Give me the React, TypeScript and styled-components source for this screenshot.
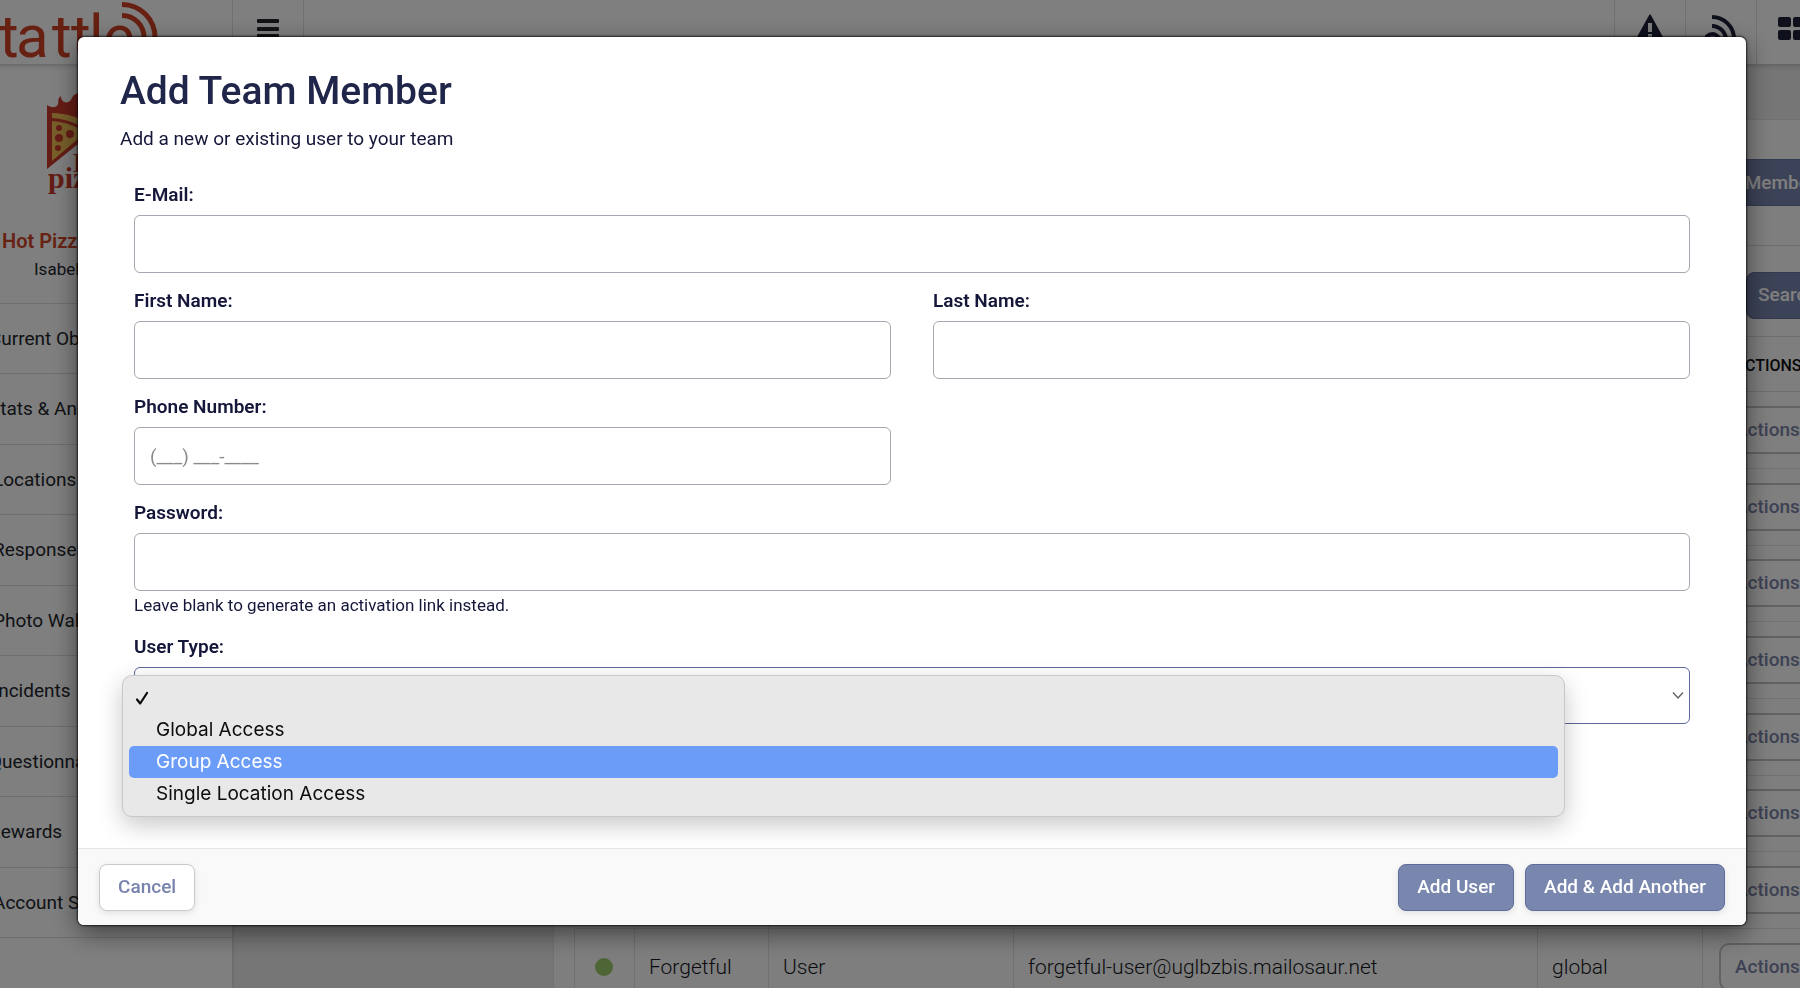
import React from "react";
import styled, { createGlobalStyle } from "styled-components";

const GlobalStyle = createGlobalStyle`
  *, *::before, *::after { box-sizing: border-box; }
  html, body, #root { height: 100%; }
  body {
    margin: 0;
    overflow: hidden;
    background: #ededed;
    color: #15173a;
    font-family: Roboto, "Liberation Sans", sans-serif;
    font-size: 19px;
    line-height: 24px;
  }
  button, input, select { font: inherit; color: inherit; }
`;

const Shell = styled.div`
  height: 100vh;
  margin: 0 -60px 0 -46px;
  display: flex;
  flex-direction: column;
  overflow: hidden;
`;

const TopBar = styled.header`
  flex: none;
  height: 64px;
  padding-right: 33px;
  display: flex;
  background: #fff;
  box-shadow: 0 1px 6px rgba(0, 0, 0, 0.25);
  z-index: 1;
`;

const Brand = styled.a`
  width: 278px;
  padding-left: 46px;
  svg { display: block; }
`;

const BarButton = styled.button`
  width: 71px;
  padding: 0;
  border: 0;
  border-left: 1px solid #e0e0e0;
  background: none;
  display: flex;
  justify-content: center;
  align-items: flex-start;
`;

const BarSpacer = styled.div`
  flex: 1;
  border-left: 1px solid #e0e0e0;
`;

const Columns = styled.div`
  flex: 1;
  min-height: 0;
  display: flex;
`;

const Sidebar = styled.aside`
  flex: none;
  width: 278px;
  background: #fff;
  box-shadow: 0 0 4px rgba(0, 0, 0, 0.2);
`;

const Profile = styled.div`
  height: 240px;
  padding: 28px 0 0 48px;
  border-bottom: 1px solid #dedede;
  svg { display: block; margin-left: 40px; }
`;

const Company = styled.strong`
  display: block;
  margin-top: 32px;
  color: #d04527;
  font-size: 20px;
  font-weight: 600;
`;

const UserName = styled.div`
  padding-left: 32px;
  margin-top: 4px;
  font-size: 17px;
  color: #22252c;
`;

const NavLink = styled.a`
  display: flex;
  align-items: center;
  height: 70px;
  padding-left: 20px;
  border-bottom: 1px solid #dedede;
  color: #22252c;
  text-decoration: none;
  white-space: nowrap;
  &:nth-child(even) { height: 71px; }
`;

const NavGlyph = styled.span<{ $width: number }>`
  flex: none;
  width: ${(p) => p.$width}px;
`;

const Main = styled.main`
  flex: 1;
  min-width: 0;
  padding: 55px 0 0 321px;
`;

const Panel = styled.section`
  background: #fcfcfc;
  min-height: 100%;
  border: 1px solid #e2e2e2;
`;

const PanelHead = styled.div<{ $height: number; $drop?: number }>`
  height: ${(p) => p.$height}px;
  padding-top: ${(p) => p.$drop ?? 0}px;
  display: flex;
  align-items: center;
  justify-content: flex-end;
  border-bottom: 1px solid #dcdcdc;
`;

const PanelButton = styled.button<{ $width: number; $inset: number }>`
  height: 47px;
  width: ${(p) => p.$width}px;
  padding: 0 0 0 ${(p) => p.$inset}px;
  border: 1px solid #6774a0;
  border-radius: 8px;
  background: #7985ae;
  color: #fff;
  font-weight: 500;
  text-align: left;
  white-space: nowrap;
`;

const Team = styled.table`
  width: calc(100% - 20px);
  margin-left: 20px;
  border-collapse: collapse;
  table-layout: fixed;
  th {
    height: 54px;
    padding: 4px 0 0;
    border-bottom: 1px solid #dcdcdc;
    font-size: 16px;
    font-weight: 500;
    text-align: left;
    color: #111;
  }
  th:last-child { padding-left: 32px; }
  td {
    height: 77px;
    padding: 0 14px;
    border: 1px solid #e2e2e2;
    font-size: 21px;
    font-weight: 300;
    color: #15171c;
  }
  tr:nth-child(3n) td { height: 76px; }
  td:first-child { padding-left: 20px; }
`;

const StatusDot = styled.span`
  display: block;
  width: 18px;
  height: 18px;
  border-radius: 50%;
  background: #9ccc6a;
`;

const RowAction = styled.button`
  display: block;
  width: 120px;
  height: 48px;
  margin-left: 2px;
  padding: 0 14px;
  border: 2px solid #c4c4c4;
  border-radius: 10px;
  background: #fff;
  color: #7b83a8;
  font-size: 19px;
  font-weight: 500;
  text-align: left;
`;

const Backdrop = styled.div`
  position: fixed;
  inset: 0;
  display: flex;
  align-items: flex-start;
  padding: 37px 54px 37px 78px;
  background: rgba(0, 0, 0, 0.5);
  z-index: 10;
`;

const Modal = styled.form`
  flex: 1;
  border-radius: 6px;
  background: #fff;
  box-shadow: 0 0 2px 1px rgba(0, 0, 0, 0.7), 0 8px 26px rgba(0, 0, 0, 0.5);
`;

const ModalHead = styled.header`
  padding: 30px 42px 0;
`;

const Title = styled.h1`
  margin: 0;
  font-size: 39px;
  line-height: 48px;
  font-weight: 500;
  color: #20254a;
`;

const Subtitle = styled.p`
  margin: 12px 0 0;
`;

const Fields = styled.div`
  display: grid;
  grid-template-columns: 1fr 1fr;
  column-gap: 42px;
  row-gap: 16px;
  padding: 32px 56px 124px;
`;

const Field = styled.div<{ $wide?: boolean }>`
  grid-column: ${(p) => (p.$wide ? "1 / -1" : "auto")};
  display: flex;
  flex-direction: column;
`;

const Label = styled.label`
  margin-bottom: 8px;
  font-weight: 600;
`;

const TextInput = styled.input`
  width: 100%;
  height: 58px;
  padding: 0 15px;
  border: 1px solid #a5a8b0;
  border-radius: 6px;
  background: #fff;
  outline: 0;
  &::placeholder { color: #8b8b8e; opacity: 1; }
`;

const Hint = styled.small`
  font-size: 17px;
  line-height: 28px;
`;

const SelectWrap = styled.div`
  position: relative;
`;

const TypeSelect = styled.select`
  display: block;
  width: 100%;
  height: 57px;
  padding: 0 15px;
  border: 1px solid #5a6b9a;
  border-radius: 6px;
  background: #fff;
  appearance: none;
  outline: 0;
`;

const Chevron = styled.svg`
  position: absolute;
  right: 5px;
  top: 24px;
  pointer-events: none;
`;

const Options = styled.ul`
  position: absolute;
  top: 8px;
  left: -12px;
  right: 125px;
  margin: 0;
  padding: 6px;
  list-style: none;
  border: 1px solid #c8c8c8;
  border-radius: 10px;
  background: #e8e8e8;
  box-shadow: 0 8px 24px rgba(0, 0, 0, 0.22);
`;

const Option = styled.li<{ $active?: boolean }>`
  display: grid;
  grid-template-columns: 20px 1fr;
  align-items: center;
  column-gap: 1px;
  height: 32px;
  padding-left: 6px;
  border-radius: 5px;
  background: ${(p) => (p.$active ? "#6b9df8" : "transparent")};
  color: ${(p) => (p.$active ? "#fff" : "#0c0c0c")};
  font-family: Inter, sans-serif;
`;

const ModalFoot = styled.footer`
  display: flex;
  align-items: center;
  gap: 11px;
  height: 77px;
  padding: 0 21px;
  border-top: 1px solid #e6e6e6;
  border-radius: 0 0 6px 6px;
  background: #f9f9f9;
`;

const Button = styled.button<{ $plain?: boolean }>`
  height: 47px;
  padding: 0 18px;
  border: 1px solid ${(p) => (p.$plain ? "#c9c9d0" : "#5f6c9c")};
  border-radius: 8px;
  background: ${(p) => (p.$plain ? "#fff" : "#7986ae")};
  color: ${(p) => (p.$plain ? "#7883ae" : "#fff")};
  font-weight: 500;
  box-shadow: 0 2px 6px rgba(0, 0, 0, 0.1);
  margin-right: ${(p) => (p.$plain ? "auto" : "0")};
`;

const nav = [
  { label: "Current Observations", glyph: 15 },
  { label: "Stats & Analytics", glyph: 15 },
  { label: "Locations", glyph: 19 },
  { label: "Responses", glyph: 19 },
  { label: "Photo Wall", glyph: 19 },
  { label: "Incidents", glyph: 19 },
  { label: "Questionnaires", glyph: 15 },
  { label: "Rewards", glyph: 15 },
  { label: "Account Settings", glyph: 19 },
];

const columns = [60, 134, 245, 524, 165];
const rows = [0, 1, 2, 3, 4, 5, 6, 7];

const TattleLogo = () => (
  <svg width="170" height="64" viewBox="0 0 170 64" aria-label="tattle">
    <text x="-1 16 52 71 89 103" y="57" fill="#cf4124" fontFamily="Roboto, sans-serif" fontSize="60">tattle</text>
    <g fill="none" stroke="#cf4124" strokeWidth="5">
      <path d="M122 4.500A33 33 0 0 1 155 38" />
      <path d="M122 15.500A22 22 0 0 1 144 38" />
    </g>
  </svg>
);

const PizzaLogo = () => (
  <svg width="110" height="105" viewBox="0 0 110 105" aria-label="Hot Pizza">
    <path d="M5 77V13c4 3 10 3 11-1 1-3-1-5 3-8 0 6 5 8 9 5 3-3 1-6 9-8l25 30z" fill="#c93b2c" />
    <path d="M10 21c14 0 30 5 44 14l-4 6C38 32 24 27 10 26z" fill="#f0bf55" />
    <path d="M10 29c12 1 24 5 34 11L10 69z" fill="#f0bf55" />
    <g fill="#c93b2c">
      <circle cx="17" cy="36" r="3" /><circle cx="17" cy="46" r="4" /><circle cx="28" cy="42" r="4" /><circle cx="16" cy="56" r="3" />
    </g>
    <text x="31" y="80" fill="#c93b2c" fontFamily="Liberation Serif, serif" fontWeight="700" fontSize="28">H</text>
    <text x="6" y="96" fill="#c93b2c" fontFamily="Liberation Serif, serif" fontWeight="700" fontSize="30">pizza</text>
  </svg>
);

export default function App() {
  return (
    <>
      <GlobalStyle />
      <Shell>
        <TopBar>
          <Brand href="#"><TattleLogo /></Brand>
          <BarButton type="button" aria-label="Menu">
            <svg width="22" height="40" viewBox="0 0 22 40" fill="#24262c">
              <rect y="19" width="22" height="4" rx="1" /><rect y="27" width="22" height="4" rx="1" /><rect y="34" width="22" height="4" rx="1" />
            </svg>
          </BarButton>
          <BarSpacer />
          <BarButton type="button" aria-label="Alerts">
            <svg width="32" height="44" viewBox="0 0 32 44">
              <path d="M16 15.500 30 41H2z" fill="#1c2038" stroke="#1c2038" strokeWidth="2" strokeLinejoin="round" />
              <path d="M14 23h4v9h-4zM14 34h4v4h-4z" fill="#fff" />
            </svg>
          </BarButton>
          <BarButton type="button" aria-label="Signals">
            <svg width="32" height="44" viewBox="0 0 32 44" fill="none" stroke="#1c2038" strokeWidth="4">
              <path d="M7 17a22 22 0 0 1 22 22" /><path d="M7 26a14 14 0 0 1 14 14" /><path d="M0 38q8-8 14 0" />
            </svg>
          </BarButton>
          <BarButton type="button" aria-label="Apps">
            <svg width="28" height="44" viewBox="0 0 28 44" fill="#1c2038">
              <rect y="17" width="13" height="10" rx="2" /><rect x="15" y="17" width="13" height="10" rx="2" />
              <rect y="30" width="13" height="10" rx="2" /><rect x="15" y="30" width="13" height="10" rx="2" />
            </svg>
          </BarButton>
        </TopBar>
        <Columns>
          <Sidebar>
            <Profile>
              <PizzaLogo />
              <Company>Hot Pizza</Company>
              <UserName>Isabella</UserName>
            </Profile>
            <nav>
              {nav.map((n) => (
                <NavLink href="#" key={n.label}><NavGlyph $width={n.glyph} />{n.label}</NavLink>
              ))}
            </nav>
          </Sidebar>
          <Main>
            <Panel>
              <PanelHead $height={126}>
                <PanelButton type="button" $width={272} $inset={118}>Add Member</PanelButton>
              </PanelHead>
              <PanelHead $height={91} $drop={8}>
                <PanelButton type="button" $width={113} $inset={11}>Search</PanelButton>
              </PanelHead>
              <Team>
                <colgroup>{columns.map((w) => <col key={w} width={w} />)}<col /></colgroup>
                <thead><tr><th /><th /><th /><th /><th /><th>ACTIONS</th></tr></thead>
                <tbody>
                  {rows.map((r) => (
                    <tr key={r}>
                      <td><StatusDot /></td>
                      <td>Forgetful</td>
                      <td>User</td>
                      <td>forgetful-user@uglbzbis.mailosaur.net</td>
                      <td>global</td>
                      <td><RowAction type="button">Actions</RowAction></td>
                    </tr>
                  ))}
                </tbody>
              </Team>
            </Panel>
          </Main>
        </Columns>
      </Shell>

      <Backdrop>
        <Modal role="dialog" aria-labelledby="title">
          <ModalHead>
            <Title id="title">Add Team Member</Title>
            <Subtitle>Add a new or existing user to your team</Subtitle>
          </ModalHead>
          <Fields>
            <Field $wide><Label htmlFor="email">E-Mail:</Label><TextInput id="email" type="email" /></Field>
            <Field><Label htmlFor="first">First Name:</Label><TextInput id="first" /></Field>
            <Field><Label htmlFor="last">Last Name:</Label><TextInput id="last" /></Field>
            <Field><Label htmlFor="phone">Phone Number:</Label><TextInput id="phone" type="tel" placeholder="(___) ___-____" /></Field>
            <Field $wide>
              <Label htmlFor="password">Password:</Label>
              <TextInput id="password" type="password" />
              <Hint>Leave blank to generate an activation link instead.</Hint>
            </Field>
            <Field $wide>
              <Label htmlFor="type">User Type:</Label>
              <SelectWrap>
                <TypeSelect id="type" defaultValue="">
                  <option value="" />
                  <option>Global Access</option>
                  <option>Group Access</option>
                  <option>Single Location Access</option>
                </TypeSelect>
                <Chevron width="14" height="9" viewBox="0 0 14 9" fill="none" stroke="#666" strokeWidth="1.500">
                  <path d="M2 1.500 7 7l5-5.500" />
                </Chevron>
                <Options role="listbox" aria-label="User Type">
                  <Option role="option" aria-selected="true">
                    <svg width="14" height="15" viewBox="0 0 14 15" fill="none" stroke="#0c0c0c" strokeWidth="2.200" strokeLinecap="round" strokeLinejoin="round">
                      <path d="M2 8.500 5.200 12.500 12 2" />
                    </svg>
                  </Option>
                  <Option role="option"><span />Global Access</Option>
                  <Option role="option" $active><span />Group Access</Option>
                  <Option role="option"><span />Single Location Access</Option>
                </Options>
              </SelectWrap>
            </Field>
          </Fields>
          <ModalFoot>
            <Button type="button" $plain>Cancel</Button>
            <Button type="button">Add User</Button>
            <Button type="button">Add &amp; Add Another</Button>
          </ModalFoot>
        </Modal>
      </Backdrop>
    </>
  );
}
